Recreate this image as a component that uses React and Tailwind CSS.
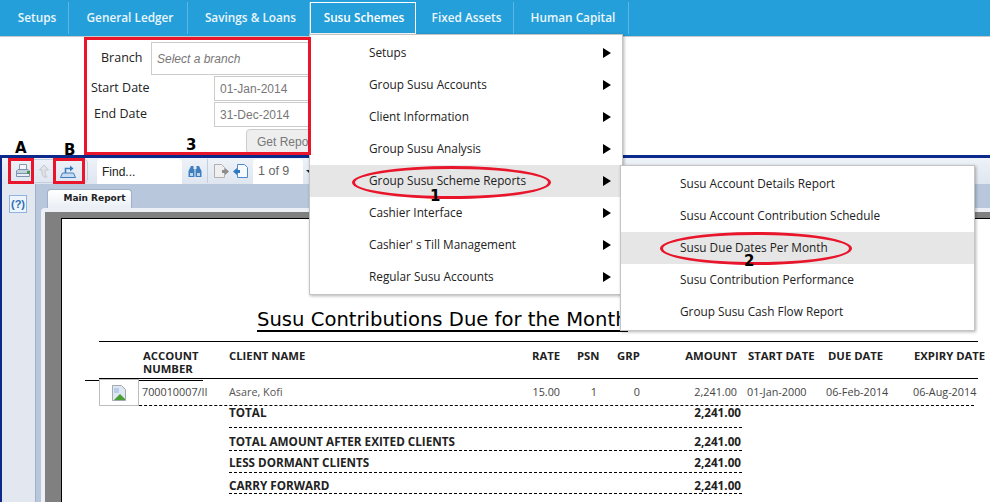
const navItems = [
  { label: "Setups", w: 67 },
  { label: "General Ledger", w: 119 },
  { label: "Savings & Loans", w: 122 },
  { label: "Susu Schemes", w: 106, active: true },
  { label: "Fixed Assets", w: 98 },
  { label: "Human Capital", w: 115 },
];

const menuItems = [
  "Setups",
  "Group Susu Accounts",
  "Client Information",
  "Group Susu Analysis",
  "Group Susu Scheme Reports",
  "Cashier Interface",
  "Cashier' s Till Management",
  "Regular Susu Accounts",
];

const subItems = [
  "Susu Account Details Report",
  "Susu Account Contribution Schedule",
  "Susu Due Dates Per Month",
  "Susu Contribution Performance",
  "Group Susu Cash Flow Report",
];

const totals = [
  { label: "TOTAL", cls: "h-[14px] mb-[7px]" },
  { label: "TOTAL AMOUNT AFTER EXITED CLIENTS", cls: "h-[16px] mt-[6px]" },
  { label: "LESS DORMANT CLIENTS", cls: "h-[16px] mt-[4px] mb-px" },
  { label: "CARRY FORWARD", cls: "h-[15px] mt-[5px]" },
];

function TopNav() {
  return (
    <div className="flex h-[37px] shrink-0 items-start border-b border-[#c8c8c8] bg-[#259fd9] pl-[2px] pt-[2px]">
      {navItems.map((item) => (
        <div
          key={item.label}
          style={{ width: item.w }}
          className={
            item.active
              ? "flex h-[32px] items-center justify-center border border-white pl-[2px] text-[11.8px] font-semibold text-white"
              : "flex h-[32px] items-center justify-center border-r border-[#5bb8e4] pl-[4px] text-[11.8px] font-semibold text-[#eaf6fc]"
          }
        >
          {item.label}
        </div>
      ))}
    </div>
  );
}

function FilterForm() {
  return (
    <div className="flex h-[118px] shrink-0 flex-col pl-[87px] pt-[5px] text-[12.5px] text-[#222]">
      <div className="flex h-[33px] items-center">
        <span className="w-[64px] pl-[14px]">Branch</span>
        <div className="flex h-[33px] w-[170px] items-center border border-[#ccc] pl-[5px] text-[12px] italic text-[#777] font-['Liberation_Sans',sans-serif]">
          Select a branch
        </div>
      </div>
      <div className="mt-px flex h-[25px] items-center">
        <span className="w-[127px] pl-[4px]">Start Date</span>
        <div className="flex h-[25px] w-[100px] items-center border border-[#ccc] pl-[5px] text-[12px] text-[#777] font-['Liberation_Sans',sans-serif]">
          01-Jan-2014
        </div>
      </div>
      <div className="mt-px flex h-[25px] items-center">
        <span className="w-[127px] pl-[7px]">End Date</span>
        <div className="flex h-[25px] w-[100px] items-center border border-[#ccc] pl-[5px] text-[12px] text-[#777] font-['Liberation_Sans',sans-serif]">
          31-Dec-2014
        </div>
      </div>
      <div className="mt-[2px] pl-[159px]">
        <div className="flex h-[25px] w-[90px] items-center rounded-sm border border-[#ccc] bg-[#eeeeee] pl-[10px] text-[12px] text-[#777] font-['Liberation_Sans',sans-serif]">
          Get Report
        </div>
      </div>
    </div>
  );
}

function PrinterIcon() {
  return (
    <svg width="16" height="16" viewBox="0 0 16 16" className="shrink-0">
      <path d="M4.5 1.5h7v5h-7z" fill="#f4f6fa" stroke="#8a97a8" />
      <path d="M1.5 8 3 6.5h10L14.5 8v4.5h-13z" fill="#c3d0e0" stroke="#7d93ad" />
      <path d="M1.5 10.5h13v3h-13z" fill="#e9eef5" stroke="#7d93ad" />
      <rect x="12" y="8" width="3" height="3" fill="#3d9a4c" />
    </svg>
  );
}

function UpArrowIcon() {
  return (
    <svg width="12" height="16" viewBox="0 0 12 16" className="shrink-0">
      <path d="M6 2 1.5 7H4v4l2 3h3l-2-3V7h3.5z" fill="#e2e5e9" stroke="#c2c7cd" />
    </svg>
  );
}

function ExportIcon() {
  return (
    <svg width="16" height="16" viewBox="0 0 16 16" className="shrink-0">
      <path d="M.5 14.5 2.5 10h11l2 4.5z" fill="#c7dcf2" stroke="#3f7fc0" />
      <path d="M5.5 10V5.5h5" fill="none" stroke="#3f7fc0" strokeWidth="1.6" />
      <path d="M10 2.5 13.5 5.5 10 8.5z" fill="#2f78c4" />
    </svg>
  );
}

function Binoculars() {
  return (
    <svg width="14" height="13" viewBox="0 0 14 13">
      <path d="M3 1h2.5v3h1v8h-6V6z" fill="#3f7fc0" />
      <path d="M11 1H8.5v3h-1v8h6V6z" fill="#3f7fc0" />
      <path d="M2 8h3v3H2zM9 8h3v3H9z" fill="#bcd4ee" />
    </svg>
  );
}

function PageIcon({ back }) {
  return (
    <svg width="16" height="16" viewBox="0 0 16 16" className="shrink-0">
      <path
        d={back ? "M4.5 1.5h7l3 3v10h-10z" : "M1.5 1.5h7l3 3v10h-10z"}
        fill={back ? "#f6f9fd" : "#efefef"}
        stroke={back ? "#4d8ac8" : "#b0b0b0"}
      />
      {back ? (
        <path d="M0 8.5l4-3.5v2h3v3H4v2z" fill="#2f78c4" />
      ) : (
        <path d="M16 8.5l-4-3.5v2H9v3h3v2z" fill="#8d8d8d" />
      )}
    </svg>
  );
}

function Toolbar() {
  return (
    <div className="flex h-[26px] shrink-0 items-start bg-gradient-to-b from-[#eef2f8] to-[#dfe6f0] pl-[6px] pt-px">
      <div className="flex h-[24px] w-[80px] items-center rounded-sm border border-[#c3cfdf] pl-[6px]">
        <PrinterIcon />
        <div className="ml-[7px]">
          <UpArrowIcon />
        </div>
        <div className="ml-[10px]">
          <ExportIcon />
        </div>
      </div>
      <div className="ml-[9px] flex h-[25px] w-[85px] items-center rounded-t-sm bg-white pl-[5px] text-[12px] text-[#222] font-['Liberation_Sans',sans-serif]">
        Find...
      </div>
      <div className="flex h-[24px] w-[26px] items-center justify-center border-r border-[#c3cfdf]">
        <Binoculars />
      </div>
      <div className="flex h-[24px] items-center gap-[4px] pl-[5px]">
        <PageIcon />
        <PageIcon back />
      </div>
      <div className="ml-[4px] flex h-[25px] w-[50px] items-center rounded-t-sm bg-white pl-[5px] text-[12.5px] text-[#666] font-['Liberation_Sans',sans-serif]">
        1 of 9
      </div>
      <div className="ml-[3px] mt-[11px] h-0 w-0 border-x-[3px] border-t-[3px] border-x-transparent border-t-[#222]" />
    </div>
  );
}

function ReportTable() {
  return (
    <div className="relative text-[#222] font-['Open_Sans',sans-serif]">
      <div className="flex pl-[195px] pt-[91px]">
        <div className="shrink-0 whitespace-nowrap border-b-2 border-black text-[19.6px] leading-[20px] text-black font-['DejaVu_Sans',sans-serif]">
          Susu Contributions Due for the Month
        </div>
      </div>
      <div className="ml-[37px] mt-[9px] flex h-[38px] w-[879px] border-y border-black pt-[7px] text-[11.3px] font-bold leading-[13px] whitespace-nowrap">
        <div className="ml-[44px] w-[86px] shrink-0">
          ACCOUNT
          <br />
          NUMBER
        </div>
        <div className="w-[303px] shrink-0">CLIENT NAME</div>
        <div className="w-[45px] shrink-0">RATE</div>
        <div className="w-[40px] shrink-0">PSN</div>
        <div className="w-[40px] shrink-0">GRP</div>
        <div className="w-[80px] shrink-0 text-right">AMOUNT</div>
        <div className="ml-[11px] w-[80px] shrink-0">START DATE</div>
        <div className="w-[86px] shrink-0">DUE DATE</div>
        <div className="shrink-0">EXPIRY DATE</div>
      </div>
      <div className="relative ml-[37px] flex h-[27px] w-[875px] border-b border-dashed border-black text-[10.8px] text-[#444] whitespace-nowrap">
        <div className="absolute -left-[14px] top-px h-px w-[118px] bg-black" />
        <div className="relative flex h-[27px] w-[40px] shrink-0 items-center justify-center border border-[#bdbdbd] bg-white">
          <svg width="16" height="16" viewBox="0 0 16 16">
            <path d="M1.5.5h9l4 4v11h-13z" fill="#dfe7f3" stroke="#a4a9b0" />
            <path d="M3 3h5v5H3z" fill="#b7cdea" />
            <path d="M3 15l6-6 5 5v1z" fill="#4b9e33" />
          </svg>
        </div>
        <div className="flex w-[90px] shrink-0 items-center pl-[3px]">700010007/II</div>
        <div className="flex w-[331px] shrink-0 items-center justify-between">
          <span className="text-[#555]">Asare, Kofi</span>
          <span>15.00</span>
        </div>
        <div className="flex w-[37px] shrink-0 items-center justify-end">1</div>
        <div className="flex w-[43px] shrink-0 items-center justify-end">0</div>
        <div className="flex w-[97px] shrink-0 items-center justify-end">2,241.00</div>
        <div className="ml-[10px] flex w-[79px] shrink-0 items-center">01-Jan-2000</div>
        <div className="flex w-[87px] shrink-0 items-center">06-Feb-2014</div>
        <div className="flex shrink-0 items-center">06-Aug-2014</div>
      </div>
      <div className="ml-[167px] w-[513px] text-[11.7px] font-bold">
        {totals.map((row) => (
          <div key={row.label} className="border-b border-dashed border-black">
            <div className={`${row.cls} flex items-center justify-between pr-px`}>
              <span>{row.label}</span>
              <span>2,241.00</span>
            </div>
          </div>
        ))}
      </div>
    </div>
  );
}

function ReportPane() {
  return (
    <div className="flex min-h-0 flex-1">
      <div className="w-[34px] shrink-0 border-r border-[#9fb0c8] bg-[#e3e8f0] pl-[7px] pt-[11px]">
        <div className="flex h-[18px] w-[18px] items-center justify-center border border-[#8fb4df] bg-[#eef4fb] text-[11px] font-bold text-[#2f6fb5] font-['Liberation_Sans',sans-serif]">
          (?)
        </div>
      </div>
      <div className="flex min-w-0 flex-1 flex-col bg-[#b8c7dc]">
        <div className="flex h-[24px] shrink-0 items-end pl-[11px]">
          <div className="flex h-[19px] w-[85px] items-center justify-center rounded-t-[4px] border border-b-0 border-[#9fb0c8] bg-gradient-to-b from-white to-[#eaeff6] pl-[10px] text-[9px] font-bold text-[#222] font-['DejaVu_Sans',sans-serif]">
            Main Report
          </div>
        </div>
        <div className="ml-[5px] flex min-h-0 flex-1 flex-col rounded-tl-[4px] bg-[#eceff5] pl-[4px] pt-[4px]">
          <div className="flex-1 overflow-hidden bg-[#808080] pl-[16px] pt-[6px]">
            <div className="h-[400px] border-l border-t border-black bg-white">
              <ReportTable />
            </div>
          </div>
        </div>
      </div>
    </div>
  );
}

function Ring({ className }) {
  return (
    <div className={`absolute rounded-[50%] border-[3px] border-[#e8152b] ${className}`} />
  );
}

function Menus() {
  return (
    <>
      <div className="absolute left-[309px] top-[34px] w-[314px] border border-[#c4c4c4] bg-white pt-[2px] pb-px text-[11.8px] text-[#222] shadow-[1px_1px_3px_rgba(0,0,0,0.3)]">
        {menuItems.map((item, i) => (
          <div
            key={item}
            className={
              i === 4
                ? "flex h-[32px] items-center justify-between bg-[#e6e6e6] pl-[59px] pr-[11px]"
                : "flex h-[32px] items-center justify-between pl-[59px] pr-[11px]"
            }
          >
            <span>{item}</span>
            <span className="h-0 w-0 border-y-[5px] border-l-[8px] border-y-transparent border-l-black" />
          </div>
        ))}
      </div>
      <div className="absolute left-[620px] top-[165px] w-[355px] border border-[#c4c4c4] bg-white pt-[2px] pb-[2px] text-[11.8px] text-[#222] shadow-[1px_1px_3px_rgba(0,0,0,0.3)]">
        {subItems.map((item, i) => (
          <div
            key={item}
            className={
              i === 2
                ? "flex h-[32px] items-center bg-[#e6e6e6] pl-[59px]"
                : "flex h-[32px] items-center pl-[59px]"
            }
          >
            {item}
          </div>
        ))}
      </div>
    </>
  );
}

// red marks drawn on top of the screenshot
function Annotations() {
  const mark = "absolute border-[3px] border-[#e8152b]";
  const letter = "absolute text-[15px] font-bold leading-none text-black font-['DejaVu_Sans',sans-serif]";
  return (
    <>
      <div className={`${mark} left-[84px] top-[37px] h-[118px] w-[227px]`} />
      <div className={`${mark} left-[8px] top-[158px] h-[26px] w-[26px]`} />
      <div className={`${mark} left-[53px] top-[158px] h-[26px] w-[32px]`} />
      <span className={`${letter} left-[15px] top-[141px]`}>A</span>
      <span className={`${letter} left-[64px] top-[143px]`}>B</span>
      <span className={`${letter} left-[186px] top-[138px]`}>3</span>
      <Ring className="left-[352px] top-[166px] h-[33px] w-[199px]" />
      <span className={`${letter} left-[430px] top-[189px]`}>1</span>
      <Ring className="left-[660px] top-[232px] h-[33px] w-[192px]" />
      <span className={`${letter} left-[744px] top-[254px]`}>2</span>
    </>
  );
}

export default function App() {
  return (
    <div className="relative flex h-[502px] w-[990px] flex-col overflow-hidden bg-white font-['Open_Sans',sans-serif]">
      <TopNav />
      <FilterForm />
      <div className="flex min-h-0 flex-1 flex-col border-l-2 border-t-[3px] border-[#0b2a8c]">
        <Toolbar />
        <ReportPane />
      </div>
      <Menus />
      <Annotations />
    </div>
  );
}
